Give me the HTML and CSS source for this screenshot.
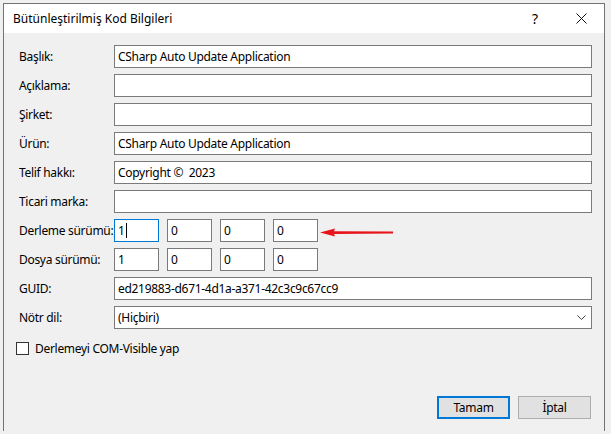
FILE: index.html
```html
<!DOCTYPE html>
<html lang="tr">
<head>
<meta charset="utf-8">
<title>Bütünleştirilmiş Kod Bilgileri</title>
<link rel="stylesheet" href="styles.css">
</head>
<body>
<div class="desk">
  <div class="window">
    <div class="titlebar">
      <span class="title">Bütünleştirilmiş Kod Bilgileri</span>
      <span class="tbtn help">?</span>
      <span class="tbtn close"><svg width="11" height="11" viewBox="0 0 11 11"><path d="M0.5 0.5L10.5 10.5M10.5 0.5L0.5 10.5" stroke="#111" stroke-width="1" fill="none"/></svg></span>
    </div>
    <div class="content">
      <div class="form">
        <span class="label">Başlık:</span><div class="field">CSharp Auto Update Application</div>
        <span class="label">Açıklama:</span><div class="field"></div>
        <span class="label">Şirket:</span><div class="field"></div>
        <span class="label">Ürün:</span><div class="field">CSharp Auto Update Application</div>
        <span class="label">Telif hakkı:</span><div class="field">Copyright ©&nbsp; 2023</div>
        <span class="label">Ticari marka:</span><div class="field"></div>
        <span class="label">Derleme sürümü:</span>
        <div class="versions">
          <div class="field vbox focus">1<span class="caret"></span></div>
          <div class="field vbox">0</div>
          <div class="field vbox">0</div>
          <div class="field vbox">0</div>
        </div>
        <span class="label">Dosya sürümü:</span>
        <div class="versions">
          <div class="field vbox">1</div>
          <div class="field vbox">0</div>
          <div class="field vbox">0</div>
          <div class="field vbox">0</div>
        </div>
        <span class="label">GUID:</span><div class="field">ed219883-d671-4d1a-a371-42c3c9c67cc9</div>
        <span class="label">Nötr dil:</span>
        <div class="field select"><span>(Hiçbiri)</span><svg class="chev" width="9" height="5" viewBox="0 0 9 5"><path d="M0.5 0.5L4.5 4.5L8.5 0.5" stroke="#444" stroke-width="1" fill="none"/></svg></div>
      </div>
      <div class="check-row">
        <span class="checkbox"></span>
        <span>Derlemeyi COM-Visible yap</span>
      </div>
      <div class="buttons">
        <span class="btn default">Tamam</span>
        <span class="btn">İptal</span>
      </div>
    </div>
  </div>
  <svg class="arrow" width="74" height="11" viewBox="0 0 74 11"><polygon points="0,5.5 15,1.5 14,4.2 73,4.6 73,6.6 14,7 15,9.5" fill="#e8141b"/></svg>
</div>
</body>
</html>
```
FILE: styles.css
```css
html, body {
  margin: 0;
  padding: 0;
}
body {
  background: #f0f0f0;
  font-family: "Noto Sans", "Open Sans", sans-serif;
  font-size: 12px;
  color: #000;
}
.desk {
  position: relative;
  padding: 3px 0 0 3px;
  height: 431px;
  box-sizing: border-box;
}
.window {
  width: 600px;
  height: 428px;
  border: 1px solid #747474;
  background: #f0f0f0;
  display: flex;
  flex-direction: column;
}
.titlebar {
  height: 29px;
  background: #fff;
  display: flex;
  align-items: center;
}
.title {
  flex: 1;
  padding-left: 9px;
}
.tbtn {
  width: 46px;
  height: 29px;
  display: flex;
  align-items: center;
  justify-content: center;
}
.help {
  font-size: 14px;
}
.content {
  flex: 1;
  display: flex;
  flex-direction: column;
  padding: 12px 12px 13px 12px;
  letter-spacing: -0.3px;
}
.form {
  margin-left: 3px;
  display: grid;
  grid-template-columns: 95px 1fr;
  grid-auto-rows: 23px;
  row-gap: 6px;
}
.label {
  align-self: center;
  white-space: nowrap;
}
.field {
  box-sizing: border-box;
  height: 23px;
  border: 1px solid #7a7a7a;
  background: #fff;
  padding: 0 3px;
  line-height: 21px;
  white-space: nowrap;
  overflow: hidden;
}
.versions {
  display: flex;
  gap: 8px;
}
.vbox {
  width: 45px;
}
.focus {
  border-color: #0078d7;
}
.caret {
  display: inline-block;
  width: 1px;
  height: 15px;
  background: #000;
  vertical-align: middle;
  margin-left: 1px;
  margin-top: -2px;
}
.select {
  display: flex;
  align-items: center;
  justify-content: space-between;
  padding-right: 5px;
}
.check-row {
  margin-top: 13px;
  height: 13px;
  display: flex;
  align-items: center;
  gap: 6px;
}
.checkbox {
  box-sizing: border-box;
  width: 13px;
  height: 13px;
  border: 1px solid #333;
  background: #fff;
}
.buttons {
  margin-top: auto;
  display: flex;
  justify-content: flex-end;
  gap: 8px;
  padding-right: 1px;
}
.btn {
  box-sizing: border-box;
  width: 73px;
  height: 23px;
  border: 1px solid #adadad;
  background: #e1e1e1;
  display: flex;
  align-items: center;
  justify-content: center;
}
.btn.default {
  border: 2px solid #0078d7;
}
.arrow {
  position: absolute;
  left: 320px;
  top: 227px;
}
```
